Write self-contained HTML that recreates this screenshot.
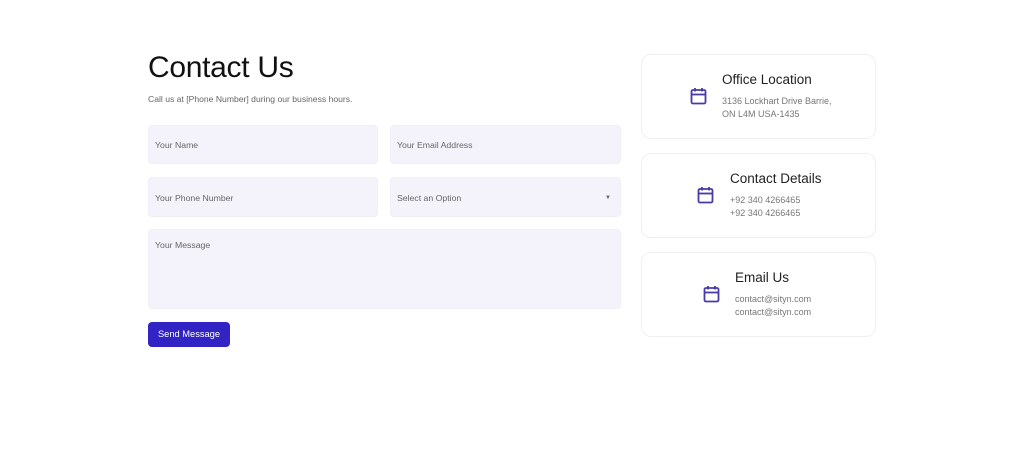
<!DOCTYPE html>
<html><head><style>
body{margin:0;width:1024px;height:467px;background:#fff;font-family:"Liberation Sans",sans-serif;position:relative;overflow:hidden}
.a{position:absolute}
h1{position:absolute;left:148px;top:51px;margin:0;font-size:30px;font-weight:500;color:#111;letter-spacing:-0.3px}
.sub{left:148px;top:94px;font-size:8.6px;color:#666}
.in{position:absolute;background:#f4f3fc;border:1px solid #f0eff7;border-radius:4px;box-sizing:border-box;font-size:8.7px;color:#666;padding-left:6px}
.btn{left:148px;top:322px;width:82px;height:25px;background:#3224c4;border-radius:4px;color:#fff;font-size:9.3px;text-align:center;line-height:25px}
.card{position:absolute;left:641px;width:235px;height:85px;border:1px solid #f0f0f0;border-radius:10px;box-sizing:border-box}
.t{position:absolute;font-size:13.5px;color:#222}
.d{position:absolute;font-size:9px;color:#777;line-height:13px}
svg{position:absolute}
</style></head><body>
<h1>Contact Us</h1>
<div class="a sub">Call us at [Phone Number] during our business hours.</div>
<div class="in" style="left:148px;top:125px;width:230px;height:39px;line-height:39px">Your Name</div>
<div class="in" style="left:390px;top:125px;width:231px;height:39px;line-height:39px">Your Email Address</div>
<div class="in" style="left:148px;top:177px;width:230px;height:40px;line-height:40px">Your Phone Number</div>
<div class="in" style="left:390px;top:177px;width:231px;height:40px;line-height:40px">Select an Option<span style="position:absolute;right:9px;font-size:6px">▼</span></div>
<div class="in" style="left:148px;top:229px;width:473px;height:80px;padding-top:10px">Your Message</div>
<div class="a btn">Send Message</div>

<div class="card" style="top:54px"></div>
<div class="card" style="top:153px"></div>
<div class="card" style="top:252px"></div>

<svg style="left:690px;top:87px" width="17" height="18" viewBox="0 0 17 18"><rect x="1.5" y="3" width="14" height="13.5" rx="1.5" fill="none" stroke="#4a3aa8" stroke-width="1.8"/><line x1="1.5" y1="7.5" x2="15.5" y2="7.5" stroke="#4a3aa8" stroke-width="1.8"/><line x1="5" y1="1" x2="5" y2="4.5" stroke="#4a3aa8" stroke-width="1.8"/><line x1="12" y1="1" x2="12" y2="4.5" stroke="#4a3aa8" stroke-width="1.8"/></svg>
<div class="t" style="left:722px;top:72px">Office Location</div>
<div class="d" style="left:722px;top:95px">3136 Lockhart Drive Barrie,<br>ON L4M USA-1435</div>

<svg style="left:697px;top:186px" width="17" height="18" viewBox="0 0 17 18"><rect x="1.5" y="3" width="14" height="13.5" rx="1.5" fill="none" stroke="#4a3aa8" stroke-width="1.8"/><line x1="1.5" y1="7.5" x2="15.5" y2="7.5" stroke="#4a3aa8" stroke-width="1.8"/><line x1="5" y1="1" x2="5" y2="4.5" stroke="#4a3aa8" stroke-width="1.8"/><line x1="12" y1="1" x2="12" y2="4.5" stroke="#4a3aa8" stroke-width="1.8"/></svg>
<div class="t" style="left:730px;top:171px">Contact Details</div>
<div class="d" style="left:730px;top:194px">+92 340 4266465<br>+92 340 4266465</div>

<svg style="left:703px;top:285px" width="17" height="18" viewBox="0 0 17 18"><rect x="1.5" y="3" width="14" height="13.5" rx="1.5" fill="none" stroke="#4a3aa8" stroke-width="1.8"/><line x1="1.5" y1="7.5" x2="15.5" y2="7.5" stroke="#4a3aa8" stroke-width="1.8"/><line x1="5" y1="1" x2="5" y2="4.5" stroke="#4a3aa8" stroke-width="1.8"/><line x1="12" y1="1" x2="12" y2="4.5" stroke="#4a3aa8" stroke-width="1.8"/></svg>
<div class="t" style="left:735px;top:270px">Email Us</div>
<div class="d" style="left:735px;top:293px">contact@sityn.com<br>contact@sityn.com</div>
</body></html>
